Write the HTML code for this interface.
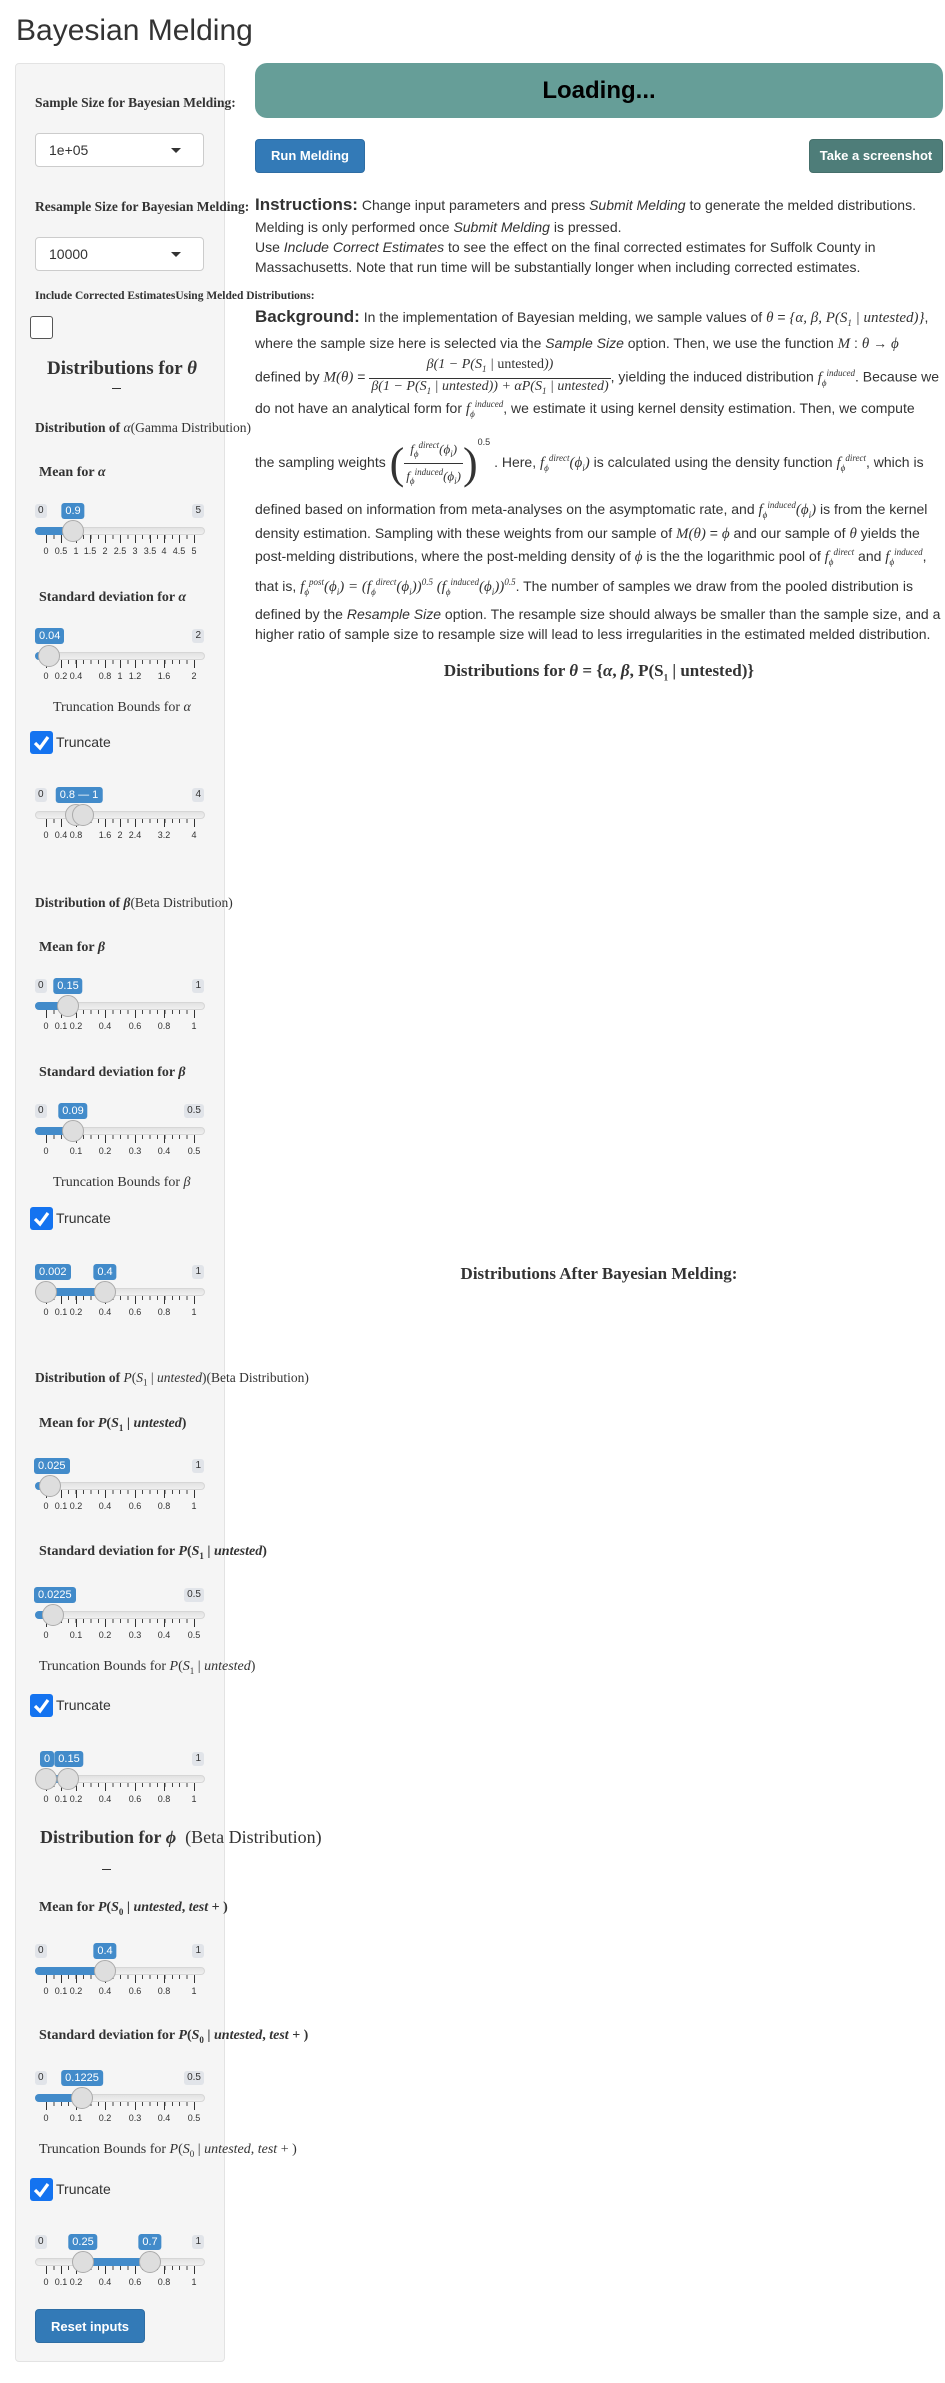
<!DOCTYPE html>
<html><head><meta charset="utf-8">
<style>
*{box-sizing:border-box;margin:0;padding:0}
body{width:945px;height:2383px;background:#fff;position:relative;font-family:"Liberation Sans",sans-serif;color:#333;overflow:hidden}
.a{position:absolute;white-space:nowrap}
.ser{font-family:"Liberation Serif",serif}
.m{font-family:"Liberation Serif",serif;font-style:italic;font-size:15px}
.lbl{font-family:"Liberation Serif",serif;font-weight:bold;font-size:13.5px;color:#333}
.well{position:absolute;left:15px;top:63px;width:210px;height:2299px;background:#f5f5f5;border:1px solid #e3e3e3;border-radius:4px}
.sel{position:absolute;left:35px;width:169px;height:34px;background:#fff;border:1px solid #ccc;border-radius:4px;font-size:14px;padding:8px 0 0 13px}
.sel:after{content:"";position:absolute;right:22px;top:14px;border-left:5px solid transparent;border-right:5px solid transparent;border-top:5px solid #333}
.cb{position:absolute;left:30px;width:23px;height:23px;border-radius:3px}
.cb.on{background:#1473f0}
.cb.off{border:1.5px solid #555;background:#fff}
.tr{position:absolute;font-size:14px;left:56px}
.sl{position:absolute;left:35px;width:170px;height:60px}
.sl .track{position:absolute;left:0;top:23px;width:170px;height:8px;border-radius:4px;background:linear-gradient(#e2e2e2,#f0f0f0);border:1px solid #d6d6d6}
.sl .bar{position:absolute;top:23px;height:8px;background:#428bca;border-radius:4px}
.sl .h{position:absolute;top:16px;width:22px;height:22px;border-radius:50%;background:#dedede;border:1px solid #ababab}
.sl .mn,.sl .mx{position:absolute;top:0;height:14px;background:#e1e4e9;color:#333;font-size:10px;padding:1px 3px;border-radius:3px;line-height:12px}
.sl .mx{right:1px}
.sl .v{position:absolute;top:-1px;height:16px;background:#428bca;color:#fff;font-size:11px;padding:1px 4px;border-radius:3px;line-height:14px;transform:translateX(-50%)}
.sl .mi{position:absolute;left:11px;top:31px;width:149px;height:4px;background:repeating-linear-gradient(90deg,#444 0 1px,transparent 1px 7.4px)}
.sl .tk{position:absolute;top:31px;width:1px;height:8px;background:#333}
.sl .tl{position:absolute;top:42px;font-size:9px;color:#333;transform:translateX(-50%)}
.btn{position:absolute;color:#fff;font-weight:bold;font-size:13px;border-radius:4px;text-align:center}
.hd{font-family:"Liberation Serif",serif;font-weight:bold}
.t{font-size:14px}
.fr{display:inline-block;vertical-align:middle;text-align:center;font-family:"Liberation Serif",serif;font-size:14px}
.fr>span{display:block;line-height:16px;padding:0 2px}
.fr>.top{border-bottom:1px solid #333;padding-bottom:1px}
sub,sup{font-size:9px}
</style></head><body>

<div class="a" style="left:16px;top:14px;font-size:30px;font-weight:500;color:#333">Bayesian Melding</div>

<div class="well"></div>

<div class="a lbl" style="left:35px;top:95px">Sample Size for Bayesian Melding:</div>
<div class="sel" style="top:133px">1e+05</div>
<div class="a lbl" style="left:35px;top:199px">Resample Size for Bayesian Melding:</div>
<div class="sel" style="top:237px">10000</div>
<div class="a lbl" style="left:35px;top:290px;font-size:11.5px">Include Corrected EstimatesUsing Melded Distributions:</div>
<div class="cb off" style="top:316px"></div>
<div class="a hd" style="left:47px;top:358px;font-size:19px">Distributions for <i>θ</i></div>
<div class="a" style="left:112px;top:388px;width:9px;height:1px;background:#333"></div>

<div class="a lbl" style="left:35px;top:420px">Distribution of <i style="font-weight:normal">α</i><span style="font-weight:normal">(Gamma Distribution)</span></div>
<div class="a lbl" style="left:39px;top:465px;font-size:14px">Mean for <i>α</i></div>
<div class="sl" style="top:504px"><div class="track"></div><div class="bar" style="left:0;width:38px"></div>
<div class="mn" style="left:0">0</div><div class="mx">5</div><div class="v" style="left:38px">0.9</div>
<div class="mi"></div>
<div class="tk" style="left:11px"></div><div class="tk" style="left:26px"></div><div class="tk" style="left:41px"></div><div class="tk" style="left:55px"></div><div class="tk" style="left:70px"></div><div class="tk" style="left:85px"></div><div class="tk" style="left:100px"></div><div class="tk" style="left:115px"></div><div class="tk" style="left:129px"></div><div class="tk" style="left:144px"></div><div class="tk" style="left:159px"></div>
<div class="tl" style="left:11px">0</div><div class="tl" style="left:26px">0.5</div><div class="tl" style="left:41px">1</div><div class="tl" style="left:55px">1.5</div><div class="tl" style="left:70px">2</div><div class="tl" style="left:85px">2.5</div><div class="tl" style="left:100px">3</div><div class="tl" style="left:115px">3.5</div><div class="tl" style="left:129px">4</div><div class="tl" style="left:144px">4.5</div><div class="tl" style="left:159px">5</div>
<div class="h" style="left:27px"></div></div>

<div class="a lbl" style="left:39px;top:590px;font-size:14px">Standard deviation for <i>α</i></div>
<div class="sl" style="top:629px"><div class="track"></div><div class="bar" style="left:0;width:14px"></div>
<div class="mx">2</div><div class="v" style="left:0;transform:none">0.04</div>
<div class="mi"></div>
<div class="tk" style="left:11px"></div><div class="tk" style="left:26px"></div><div class="tk" style="left:41px"></div><div class="tk" style="left:70px"></div><div class="tk" style="left:85px"></div><div class="tk" style="left:100px"></div><div class="tk" style="left:129px"></div><div class="tk" style="left:159px"></div>
<div class="tl" style="left:11px">0</div><div class="tl" style="left:26px">0.2</div><div class="tl" style="left:41px">0.4</div><div class="tl" style="left:70px">0.8</div><div class="tl" style="left:85px">1</div><div class="tl" style="left:100px">1.2</div><div class="tl" style="left:129px">1.6</div><div class="tl" style="left:159px">2</div>
<div class="h" style="left:3px"></div></div>

<div class="a ser" style="left:53px;top:700px;font-size:14px">Truncation Bounds for <i>α</i></div>
<div class="cb on" style="top:731px"><svg width="23" height="23"><path d="M5 12 L10 17 L18 6" stroke="#fff" stroke-width="3.2" fill="none"/></svg></div>
<div class="a tr" style="top:734px">Truncate</div>
<div class="sl" style="top:788px"><div class="track"></div><div class="bar" style="left:41px;width:7px"></div>
<div class="mn" style="left:0">0</div><div class="mx">4</div><div class="v" style="left:44px">0.8 — 1</div>
<div class="mi"></div>
<div class="tk" style="left:11px"></div><div class="tk" style="left:26px"></div><div class="tk" style="left:41px"></div><div class="tk" style="left:70px"></div><div class="tk" style="left:85px"></div><div class="tk" style="left:100px"></div><div class="tk" style="left:129px"></div><div class="tk" style="left:159px"></div>
<div class="tl" style="left:11px">0</div><div class="tl" style="left:26px">0.4</div><div class="tl" style="left:41px">0.8</div><div class="tl" style="left:70px">1.6</div><div class="tl" style="left:85px">2</div><div class="tl" style="left:100px">2.4</div><div class="tl" style="left:129px">3.2</div><div class="tl" style="left:159px">4</div>
<div class="h" style="left:30px"></div><div class="h" style="left:37px"></div></div>

<div class="a lbl" style="left:35px;top:895px">Distribution of <i>β</i><span style="font-weight:normal">(Beta Distribution)</span></div>
<div class="a lbl" style="left:39px;top:940px;font-size:14px">Mean for <i>β</i></div>
<div class="sl" style="top:979px"><div class="track"></div><div class="bar" style="left:0;width:33px"></div>
<div class="mn" style="left:0">0</div><div class="mx">1</div><div class="v" style="left:33px">0.15</div>
<div class="mi"></div>
<div class="tk" style="left:11px"></div><div class="tk" style="left:26px"></div><div class="tk" style="left:41px"></div><div class="tk" style="left:70px"></div><div class="tk" style="left:100px"></div><div class="tk" style="left:129px"></div><div class="tk" style="left:159px"></div>
<div class="tl" style="left:11px">0</div><div class="tl" style="left:26px">0.1</div><div class="tl" style="left:41px">0.2</div><div class="tl" style="left:70px">0.4</div><div class="tl" style="left:100px">0.6</div><div class="tl" style="left:129px">0.8</div><div class="tl" style="left:159px">1</div>
<div class="h" style="left:22px"></div></div>

<div class="a lbl" style="left:39px;top:1065px;font-size:14px">Standard deviation for <i>β</i></div>
<div class="sl" style="top:1104px"><div class="track"></div><div class="bar" style="left:0;width:38px"></div>
<div class="mn" style="left:0">0</div><div class="mx">0.5</div><div class="v" style="left:38px">0.09</div>
<div class="mi"></div>
<div class="tk" style="left:11px"></div><div class="tk" style="left:41px"></div><div class="tk" style="left:70px"></div><div class="tk" style="left:100px"></div><div class="tk" style="left:129px"></div><div class="tk" style="left:159px"></div>
<div class="tl" style="left:11px">0</div><div class="tl" style="left:41px">0.1</div><div class="tl" style="left:70px">0.2</div><div class="tl" style="left:100px">0.3</div><div class="tl" style="left:129px">0.4</div><div class="tl" style="left:159px">0.5</div>
<div class="h" style="left:27px"></div></div>

<div class="a ser" style="left:53px;top:1175px;font-size:14px">Truncation Bounds for <i>β</i></div>
<div class="cb on" style="top:1207px"><svg width="23" height="23"><path d="M5 12 L10 17 L18 6" stroke="#fff" stroke-width="3.2" fill="none"/></svg></div>
<div class="a tr" style="top:1210px">Truncate</div>
<div class="sl" style="top:1265px"><div class="track"></div><div class="bar" style="left:11px;width:59px"></div>
<div class="mx">1</div><div class="v" style="left:0;transform:none">0.002</div><div class="v" style="left:70px">0.4</div>
<div class="mi"></div>
<div class="tk" style="left:11px"></div><div class="tk" style="left:26px"></div><div class="tk" style="left:41px"></div><div class="tk" style="left:70px"></div><div class="tk" style="left:100px"></div><div class="tk" style="left:129px"></div><div class="tk" style="left:159px"></div>
<div class="tl" style="left:11px">0</div><div class="tl" style="left:26px">0.1</div><div class="tl" style="left:41px">0.2</div><div class="tl" style="left:70px">0.4</div><div class="tl" style="left:100px">0.6</div><div class="tl" style="left:129px">0.8</div><div class="tl" style="left:159px">1</div>
<div class="h" style="left:0"></div><div class="h" style="left:59px"></div></div>

<div class="a lbl" style="left:35px;top:1370px">Distribution of <span style="font-weight:normal"><i>P</i>(<i>S</i><sub>1</sub> | <i>untested</i>)(Beta Distribution)</span></div>
<div class="a lbl" style="left:39px;top:1416px;font-size:14px">Mean for <i>P</i>(<i>S</i><sub>1</sub> | <i>untested</i>)</div>
<div class="sl" style="top:1459px"><div class="track"></div><div class="bar" style="left:0;width:15px"></div>
<div class="mx">1</div><div class="v" style="left:-1px;transform:none">0.025</div>
<div class="mi"></div>
<div class="tk" style="left:11px"></div><div class="tk" style="left:26px"></div><div class="tk" style="left:41px"></div><div class="tk" style="left:70px"></div><div class="tk" style="left:100px"></div><div class="tk" style="left:129px"></div><div class="tk" style="left:159px"></div>
<div class="tl" style="left:11px">0</div><div class="tl" style="left:26px">0.1</div><div class="tl" style="left:41px">0.2</div><div class="tl" style="left:70px">0.4</div><div class="tl" style="left:100px">0.6</div><div class="tl" style="left:129px">0.8</div><div class="tl" style="left:159px">1</div>
<div class="h" style="left:4px"></div></div>

<div class="a lbl" style="left:39px;top:1544px;font-size:14px">Standard deviation for <i>P</i>(<i>S</i><sub>1</sub> | <i>untested</i>)</div>
<div class="sl" style="top:1588px"><div class="track"></div><div class="bar" style="left:0;width:18px"></div>
<div class="mx">0.5</div><div class="v" style="left:-1px;transform:none">0.0225</div>
<div class="mi"></div>
<div class="tk" style="left:11px"></div><div class="tk" style="left:41px"></div><div class="tk" style="left:70px"></div><div class="tk" style="left:100px"></div><div class="tk" style="left:129px"></div><div class="tk" style="left:159px"></div>
<div class="tl" style="left:11px">0</div><div class="tl" style="left:41px">0.1</div><div class="tl" style="left:70px">0.2</div><div class="tl" style="left:100px">0.3</div><div class="tl" style="left:129px">0.4</div><div class="tl" style="left:159px">0.5</div>
<div class="h" style="left:7px"></div></div>

<div class="a ser" style="left:39px;top:1659px;font-size:14px">Truncation Bounds for <i>P</i>(<i>S</i><sub>1</sub> | <i>untested</i>)</div>
<div class="cb on" style="top:1694px"><svg width="23" height="23"><path d="M5 12 L10 17 L18 6" stroke="#fff" stroke-width="3.2" fill="none"/></svg></div>
<div class="a tr" style="top:1697px">Truncate</div>
<div class="sl" style="top:1752px"><div class="track"></div><div class="bar" style="left:11px;width:22px"></div>
<div class="mx">1</div><div class="v" style="left:5px;transform:none">0</div><div class="v" style="left:34px">0.15</div>
<div class="mi"></div>
<div class="tk" style="left:11px"></div><div class="tk" style="left:26px"></div><div class="tk" style="left:41px"></div><div class="tk" style="left:70px"></div><div class="tk" style="left:100px"></div><div class="tk" style="left:129px"></div><div class="tk" style="left:159px"></div>
<div class="tl" style="left:11px">0</div><div class="tl" style="left:26px">0.1</div><div class="tl" style="left:41px">0.2</div><div class="tl" style="left:70px">0.4</div><div class="tl" style="left:100px">0.6</div><div class="tl" style="left:129px">0.8</div><div class="tl" style="left:159px">1</div>
<div class="h" style="left:0"></div><div class="h" style="left:22px"></div></div>

<div class="a hd" style="left:40px;top:1827px;font-size:18px">Distribution for <i>ϕ</i> <span style="font-weight:normal">&nbsp;(Beta Distribution)</span></div>
<div class="a" style="left:102px;top:1869px;width:9px;height:1px;background:#333"></div>

<div class="a lbl" style="left:39px;top:1900px;font-size:14px">Mean for <i>P</i>(<i>S</i><sub>0</sub> | <i>untested</i>, <i>test</i> + )</div>
<div class="sl" style="top:1944px"><div class="track"></div><div class="bar" style="left:0;width:70px"></div>
<div class="mn" style="left:0">0</div><div class="mx">1</div><div class="v" style="left:70px">0.4</div>
<div class="mi"></div>
<div class="tk" style="left:11px"></div><div class="tk" style="left:26px"></div><div class="tk" style="left:41px"></div><div class="tk" style="left:70px"></div><div class="tk" style="left:100px"></div><div class="tk" style="left:129px"></div><div class="tk" style="left:159px"></div>
<div class="tl" style="left:11px">0</div><div class="tl" style="left:26px">0.1</div><div class="tl" style="left:41px">0.2</div><div class="tl" style="left:70px">0.4</div><div class="tl" style="left:100px">0.6</div><div class="tl" style="left:129px">0.8</div><div class="tl" style="left:159px">1</div>
<div class="h" style="left:59px"></div></div>

<div class="a lbl" style="left:39px;top:2028px;font-size:14px">Standard deviation for <i>P</i>(<i>S</i><sub>0</sub> | <i>untested</i>, <i>test</i> + )</div>
<div class="sl" style="top:2071px"><div class="track"></div><div class="bar" style="left:0;width:47px"></div>
<div class="mn" style="left:0">0</div><div class="mx">0.5</div><div class="v" style="left:47px">0.1225</div>
<div class="mi"></div>
<div class="tk" style="left:11px"></div><div class="tk" style="left:41px"></div><div class="tk" style="left:70px"></div><div class="tk" style="left:100px"></div><div class="tk" style="left:129px"></div><div class="tk" style="left:159px"></div>
<div class="tl" style="left:11px">0</div><div class="tl" style="left:41px">0.1</div><div class="tl" style="left:70px">0.2</div><div class="tl" style="left:100px">0.3</div><div class="tl" style="left:129px">0.4</div><div class="tl" style="left:159px">0.5</div>
<div class="h" style="left:36px"></div></div>

<div class="a ser" style="left:39px;top:2142px;font-size:14px">Truncation Bounds for <i>P</i>(<i>S</i><sub>0</sub> | <i>untested</i>, <i>test</i> + )</div>
<div class="cb on" style="top:2178px"><svg width="23" height="23"><path d="M5 12 L10 17 L18 6" stroke="#fff" stroke-width="3.2" fill="none"/></svg></div>
<div class="a tr" style="top:2181px">Truncate</div>
<div class="sl" style="top:2235px"><div class="track"></div><div class="bar" style="left:48px;width:67px"></div>
<div class="mn" style="left:0">0</div><div class="mx">1</div><div class="v" style="left:48px">0.25</div><div class="v" style="left:115px">0.7</div>
<div class="mi"></div>
<div class="tk" style="left:11px"></div><div class="tk" style="left:26px"></div><div class="tk" style="left:41px"></div><div class="tk" style="left:70px"></div><div class="tk" style="left:100px"></div><div class="tk" style="left:129px"></div><div class="tk" style="left:159px"></div>
<div class="tl" style="left:11px">0</div><div class="tl" style="left:26px">0.1</div><div class="tl" style="left:41px">0.2</div><div class="tl" style="left:70px">0.4</div><div class="tl" style="left:100px">0.6</div><div class="tl" style="left:129px">0.8</div><div class="tl" style="left:159px">1</div>
<div class="h" style="left:37px"></div><div class="h" style="left:104px"></div></div>

<div class="btn" style="left:35px;top:2309px;width:110px;height:34px;line-height:33px;background:#337ab7;border:1px solid #2e6da4">Reset inputs</div>

<!-- main -->
<div class="a" style="left:255px;top:63px;width:688px;height:55px;background:#669e98;border-radius:12px;text-align:center;font-weight:bold;font-size:24px;line-height:55px;color:#000">Loading...</div>
<div class="btn" style="left:255px;top:139px;width:110px;height:34px;line-height:32px;background:#337ab7;border:1px solid #2e6da4">Run Melding</div>
<div class="btn" style="left:809px;top:139px;width:134px;height:34px;line-height:32px;background:#4e7d79;border:1px solid #456f6b">Take a screenshot</div>

<div class="a t" style="left:255px;top:195px"><b style="font-size:17px">Instructions:</b> Change input parameters and press <i>Submit Melding</i> to generate the melded distributions.</div>
<div class="a t" style="left:255px;top:219px">Melding is only performed once <i>Submit Melding</i> is pressed.</div>
<div class="a t" style="left:255px;top:239px">Use <i>Include Correct Estimates</i> to see the effect on the final corrected estimates for Suffolk County in</div>
<div class="a t" style="left:255px;top:259px">Massachusetts. Note that run time will be substantially longer when including corrected estimates.</div>

<div class="a t" style="left:255px;top:307px"><b style="font-size:17px">Background:</b> In the implementation of Bayesian melding, we sample values of <span class="m">θ</span> = <span class="m">{α, β, P(S<sub>1</sub> | untested)}</span>,</div>
<div class="a t" style="left:255px;top:335px">where the sample size here is selected via the <i>Sample Size</i> option. Then, we use the function <span class="m">M</span> : <span class="m">θ</span> → <span class="m">ϕ</span></div>
<div class="a t" style="left:255px;top:357px">defined by <span class="m">M(θ)</span> = <span class="fr" style="font-style:italic"><span class="top">β(1 − P(S<sub>1</sub> | <span style="font-style:normal">untested</span>))</span><span>β(1 − P(S<sub>1</sub> | untested)) + αP(S<sub>1</sub> | untested)</span></span>, yielding the induced distribution <span class="m">f<sub>ϕ</sub><sup>induced</sup></span>. Because we</div>
<div class="a t" style="left:255px;top:399px">do not have an analytical form for <span class="m">f<sub>ϕ</sub><sup>induced</sup></span>, we estimate it using kernel density estimation. Then, we compute</div>
<div class="a t" style="left:255px;top:437px">the sampling weights <span style="font-size:44px;font-weight:100;vertical-align:middle;font-family:'Liberation Serif'">(</span><span class="fr" style="font-style:italic;font-size:13px"><span class="top">f<sub>ϕ</sub><sup>direct</sup>(ϕ<sub>i</sub>)</span><span>f<sub>ϕ</sub><sup>induced</sup>(ϕ<sub>i</sub>)</span></span><span style="font-size:44px;vertical-align:middle;font-family:'Liberation Serif'">)</span><sup style="vertical-align:22px">0.5</sup> . Here, <span class="m">f<sub>ϕ</sub><sup>direct</sup>(ϕ<sub>i</sub>)</span> is calculated using the density function <span class="m">f<sub>ϕ</sub><sup>direct</sup></span>, which is</div>
<div class="a t" style="left:255px;top:500px">defined based on information from meta-analyses on the asymptomatic rate, and <span class="m">f<sub>ϕ</sub><sup>induced</sup>(ϕ<sub>i</sub>)</span> is from the kernel</div>
<div class="a t" style="left:255px;top:525px">density estimation. Sampling with these weights from our sample of <span class="m">M(θ)</span> = <span class="m">ϕ</span> and our sample of <span class="m">θ</span> yields the</div>
<div class="a t" style="left:255px;top:547px">post-melding distributions, where the post-melding density of <span class="m">ϕ</span> is the the logarithmic pool of <span class="m">f<sub>ϕ</sub><sup>direct</sup></span> and <span class="m">f<sub>ϕ</sub><sup>induced</sup></span>,</div>
<div class="a t" style="left:255px;top:577px">that is, <span class="m">f<sub>ϕ</sub><sup>post</sup>(ϕ<sub>i</sub>) = (f<sub>ϕ</sub><sup>direct</sup>(ϕ<sub>i</sub>))<sup>0.5</sup> (f<sub>ϕ</sub><sup>induced</sup>(ϕ<sub>i</sub>))<sup>0.5</sup></span>. The number of samples we draw from the pooled distribution is</div>
<div class="a t" style="left:255px;top:606px">defined by the <i>Resample Size</i> option. The resample size should always be smaller than the sample size, and a</div>
<div class="a t" style="left:255px;top:626px">higher ratio of sample size to resample size will lead to less irregularities in the estimated melded distribution.</div>

<div class="a hd" style="left:255px;width:688px;text-align:center;top:661px;font-size:17px">Distributions for <i>θ</i> = {<i>α</i>, <i>β</i>, P(S<sub>1</sub> | untested)}</div>
<div class="a hd" style="left:255px;width:688px;text-align:center;top:1264px;font-size:17px">Distributions After Bayesian Melding:</div>
</body></html>
